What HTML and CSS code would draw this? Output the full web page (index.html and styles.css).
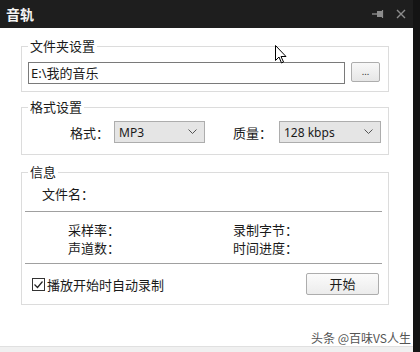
FILE: index.html
```html
<!DOCTYPE html>
<html lang="zh-CN">
  <head>
    <meta charset="UTF-8" />
    <meta name="viewport" content="width=device-width, initial-scale=1.0" />
    <title>音轨</title>
    <link rel="stylesheet" href="styles.css">
  </head>
  <body>
    <div class="window">
      <header class="titlebar">
        <h1>音轨</h1>
        <div class="title-icons">
          <svg width="12" height="10" viewBox="0 0 12 10">
            <path d="M0 5h5" stroke="#8c8c8c" stroke-width="1.4" />
            <rect x="5" y="2" width="5" height="6" fill="#8c8c8c" />
            <path d="M10.5 1v8" stroke="#8c8c8c" stroke-width="1.2" />
          </svg>
          <svg width="10" height="10" viewBox="0 0 10 10">
            <path d="M1 1l8 8M9 1l-8 8" stroke="#8c8c8c" stroke-width="1.4" />
          </svg>
        </div>
      </header>

      <main class="content">
        <div class="group group-folder">
          <span class="group-title">文件夹设置</span>
          <div class="folder-row">
            <div class="textbox">E:\我的音乐</div>
            <div class="btn btn-browse">...</div>
          </div>
        </div>

        <div class="group group-format">
          <span class="group-title">格式设置</span>
          <div class="format-row">
            <span class="format-label">格式：</span>
            <div class="combo combo-format">
              <span>MP3</span>
              <svg width="9" height="6" viewBox="0 0 9 6"><path d="M0.5 0.5l4 4 4-4" fill="none" stroke="#555" stroke-width="1" /></svg>
            </div>
            <span class="format-label label-quality">质量：</span>
            <div class="combo combo-quality">
              <span>128 kbps</span>
              <svg width="9" height="6" viewBox="0 0 9 6"><path d="M0.5 0.5l4 4 4-4" fill="none" stroke="#555" stroke-width="1" /></svg>
            </div>
          </div>
        </div>

        <div class="group group-info">
          <span class="group-title">信息</span>
          <div class="file-row">文件名：</div>
          <div class="sep"></div>
          <div class="info-grid">
            <span>采样率：</span>
            <span>录制字节：</span>
            <span>声道数：</span>
            <span>时间进度：</span>
          </div>
          <div class="sep sep-bottom"></div>
          <div class="action-row">
            <label class="check">
              <svg width="13" height="13" viewBox="0 0 13 13">
                <rect x="0.5" y="0.5" width="12" height="12" fill="#fff" stroke="#333" />
                <path d="M2.5 6.5l3 3 5-6" fill="none" stroke="#222" stroke-width="1.2" />
              </svg>
              播放开始时自动录制
            </label>
            <div class="btn btn-start">开始</div>
          </div>
        </div>

        <div class="watermark">头条 @百味VS人生</div>
      </main>
      <div class="bottom-strip"></div>

      <svg class="cursor" width="12" height="19" viewBox="0 0 12 19">
        <path d="M0.5 0.5v15l3.5-3.5 2.5 6 2-1-2.5-5.5h5z" fill="#fff" stroke="#000" stroke-width="1" />
      </svg>
    </div>
  </body>
</html>
```

FILE: styles.css
```css
* {
  box-sizing: border-box;
}

body {
  margin: 0;
  padding: 0;
  background-color: #141414;
  font-family: "Noto Sans CJK SC", "Noto Sans", sans-serif;
  font-size: 13px;
  color: #1a1a1a;
}

.window {
  position: relative;
  width: 413px;
  height: 352px;
  background-color: #fff;
}

.titlebar {
  display: flex;
  align-items: center;
  justify-content: space-between;
  height: 28px;
  padding: 0 7px 0 6px;
  background-color: #1e1e1e;
}

.titlebar h1 {
  margin: 0;
  font-size: 14px;
  font-weight: bold;
  color: #f2f2f2;
  line-height: 28px;
}

.title-icons {
  display: flex;
  align-items: center;
  gap: 12px;
}

.content {
  padding: 18px 24px 0 21px;
  height: 318px;
  position: relative;
}

.group {
  position: relative;
  width: 368px;
  border: 1px solid #dcdcdc;
}

.group-title {
  position: absolute;
  top: -10px;
  left: 6px;
  padding: 0 2px;
  background-color: #fff;
  line-height: 18px;
}

.group-folder {
  height: 46px;
  padding: 15px 0 0 6px;
}

.folder-row {
  display: flex;
  align-items: flex-start;
  gap: 6px;
}

.textbox {
  width: 317px;
  height: 22px;
  border: 1px solid #7a7a7a;
  padding-left: 2px;
  line-height: 20px;
  font-family: "Noto Sans", "Noto Sans CJK SC", sans-serif;
}

.btn {
  border: 1px solid #adadad;
  border-radius: 2px;
  background: linear-gradient(#f8f8f8, #e6e6e6);
  text-align: center;
}

.btn-browse {
  width: 29px;
  height: 20px;
  font-size: 9px;
  line-height: 18px;
  color: #444;
}

.group-format {
  height: 48px;
  margin-top: 15px;
  padding: 13px 0 0 48px;
}

.format-row {
  display: flex;
  align-items: center;
}

.format-label {
  width: 44px;
}

.label-quality {
  width: 46px;
  margin-left: 28px;
}

.combo {
  display: flex;
  align-items: center;
  justify-content: space-between;
  height: 22px;
  padding: 0 7px 0 4px;
  border: 1px solid #adadad;
  background-color: #e5e5e5;
  font-family: "Noto Sans", sans-serif;
  font-size: 12px;
}

.combo-format {
  width: 91px;
}

.combo-quality {
  width: 102px;
}

.group-info {
  height: 133px;
  margin-top: 17px;
  padding: 12px 6px 0 0;
}

.file-row {
  padding-left: 20px;
  line-height: 18px;
}

.sep {
  height: 1px;
  margin: 8px 0 0 3px;
  background-color: #a0a0a0;
}

.info-grid {
  display: grid;
  grid-template-columns: 165px auto;
  padding: 9px 0 0 46px;
  line-height: 18px;
}

.sep-bottom {
  margin-top: 6px;
}

.action-row {
  display: flex;
  align-items: center;
  justify-content: space-between;
  margin-top: 9px;
  padding: 0 3px 0 10px;
}

.check {
  display: flex;
  align-items: center;
  gap: 2px;
}

.btn-start {
  width: 73px;
  height: 22px;
  line-height: 20px;
  background: linear-gradient(#fbfbfb, #ececec);
}

.watermark {
  position: absolute;
  right: 2px;
  top: 301px;
  font-size: 12px;
  color: #555;
}

.bottom-strip {
  height: 6px;
  border-top: 1px solid #e0e0e0;
  background-color: #f0f0f0;
}

.cursor {
  position: absolute;
  left: 275px;
  top: 45px;
}
```
